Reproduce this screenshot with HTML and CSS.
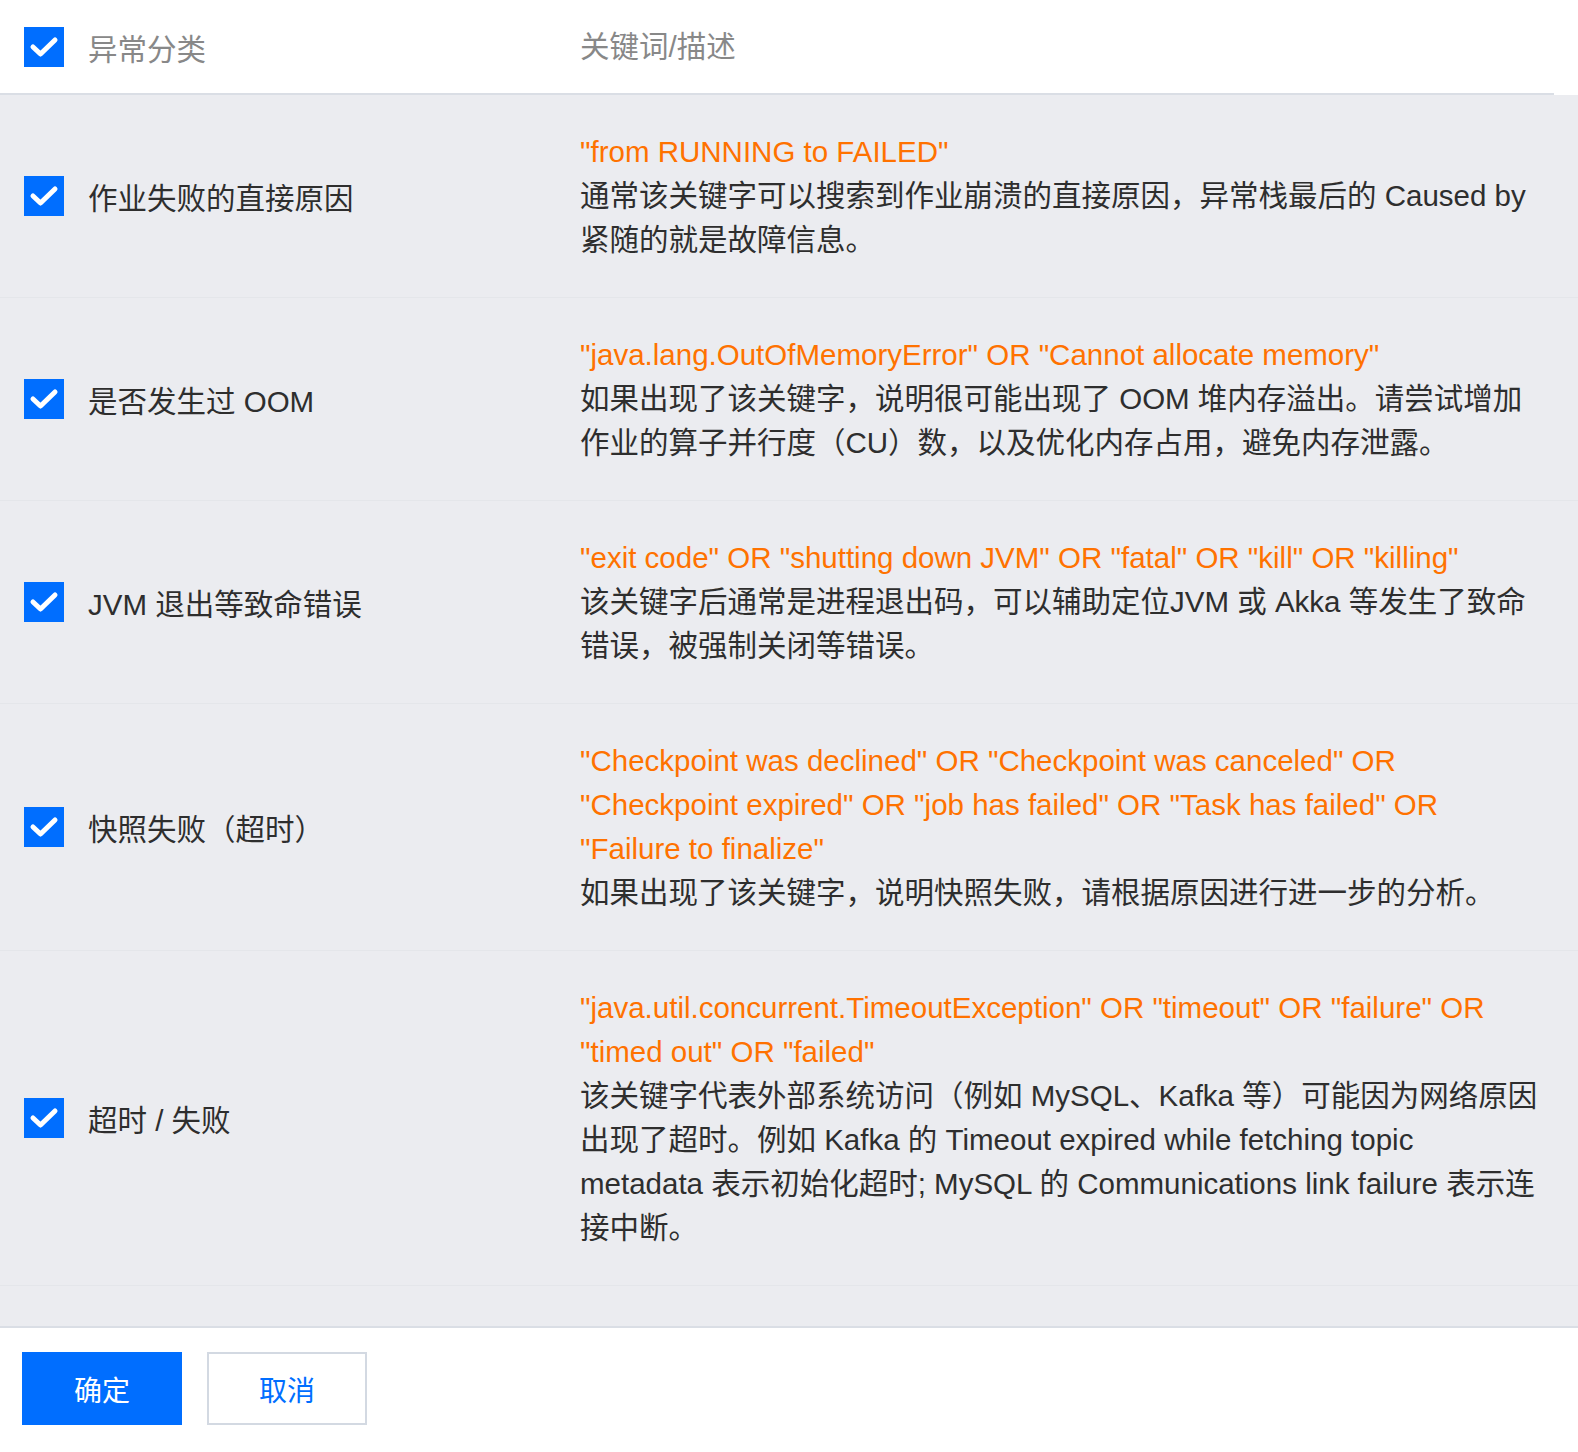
FILE: index.html
```html
<!DOCTYPE html>
<html lang="zh-CN">
<head>
    <meta charset="UTF-8">
    <title>异常分类</title>
    <link rel="stylesheet" href="styles.css">
</head>
<body>
    <div class="rule-table">
        <div class="table-head">
            <div class="col-type">
                <span class="checkbox"><svg viewBox="0 0 40 40"><path d="M9 20 L16.5 27 L31 13"/></svg></span>
                <span>异常分类</span>
            </div>
            <div class="col-desc">关键词/描述</div>
        </div>

        <div class="table-body">
            <div class="table-row">
                <div class="col-type">
                    <span class="checkbox"><svg viewBox="0 0 40 40"><path d="M9 20 L16.5 27 L31 13"/></svg></span>
                    <span>作业失败的直接原因</span>
                </div>
                <div class="col-desc">
                    <div class="keyword">"from RUNNING to FAILED"</div>
                    <div>通常该关键字可以搜索到作业崩溃的直接原因，异常栈最后的 Caused by<br>紧随的就是故障信息。</div>
                </div>
            </div>

            <div class="table-row">
                <div class="col-type">
                    <span class="checkbox"><svg viewBox="0 0 40 40"><path d="M9 20 L16.5 27 L31 13"/></svg></span>
                    <span>是否发生过 OOM</span>
                </div>
                <div class="col-desc">
                    <div class="keyword">"java.lang.OutOfMemoryError" OR "Cannot allocate memory"</div>
                    <div>如果出现了该关键字，说明很可能出现了 OOM 堆内存溢出。请尝试增加<br>作业的算子并行度（CU）数，以及优化内存占用，避免内存泄露。</div>
                </div>
            </div>

            <div class="table-row">
                <div class="col-type">
                    <span class="checkbox"><svg viewBox="0 0 40 40"><path d="M9 20 L16.5 27 L31 13"/></svg></span>
                    <span>JVM 退出等致命错误</span>
                </div>
                <div class="col-desc">
                    <div class="keyword">"exit code" OR "shutting down JVM" OR "fatal" OR "kill" OR "killing"</div>
                    <div>该关键字后通常是进程退出码，可以辅助定位JVM 或 Akka 等发生了致命<br>错误，被强制关闭等错误。</div>
                </div>
            </div>

            <div class="table-row">
                <div class="col-type">
                    <span class="checkbox"><svg viewBox="0 0 40 40"><path d="M9 20 L16.5 27 L31 13"/></svg></span>
                    <span>快照失败（超时）</span>
                </div>
                <div class="col-desc">
                    <div class="keyword">"Checkpoint was declined" OR "Checkpoint was canceled" OR<br>"Checkpoint expired" OR "job has failed" OR "Task has failed" OR<br>"Failure to finalize"</div>
                    <div>如果出现了该关键字，说明快照失败，请根据原因进行进一步的分析。</div>
                </div>
            </div>

            <div class="table-row">
                <div class="col-type">
                    <span class="checkbox"><svg viewBox="0 0 40 40"><path d="M9 20 L16.5 27 L31 13"/></svg></span>
                    <span>超时 / 失败</span>
                </div>
                <div class="col-desc">
                    <div class="keyword">"java.util.concurrent.TimeoutException" OR "timeout" OR "failure" OR<br>"timed out" OR "failed"</div>
                    <div>该关键字代表外部系统访问（例如 MySQL、Kafka 等）可能因为网络原因<br>出现了超时。例如 Kafka 的 Timeout expired while fetching topic<br>metadata 表示初始化超时; MySQL 的 Communications link failure 表示连<br>接中断。</div>
                </div>
            </div>
        </div>
    </div>

    <div class="footer">
        <button class="btn btn-primary">确定</button>
        <button class="btn btn-default">取消</button>
    </div>
</body>
</html>
```

FILE: styles.css
```css
* {
    margin: 0;
    padding: 0;
    box-sizing: border-box;
}

body {
    background: #fff;
    font-family: 'Liberation Sans', 'Noto Sans CJK SC', sans-serif;
    font-size: 29.5px;
    color: #2e2e2e;
}

.table-head {
    display: flex;
    align-items: center;
    height: 95px;
    margin-right: 24px;
    border-bottom: 2px solid #dadee5;
    color: #888;
}

.table-body {
    background: #ebecf0;
    padding-bottom: 40px;
}

.table-row {
    display: flex;
    align-items: center;
    padding: 35px 0;
    border-bottom: 1px solid #e4e6ea;
}

.col-type {
    width: 580px;
    flex-shrink: 0;
    display: flex;
    align-items: center;
    padding-left: 24px;
}

.col-desc {
    flex: 1;
    padding-right: 8px;
    line-height: 44px;
}

.checkbox {
    width: 40px;
    height: 40px;
    background: #006eff;
    margin-right: 24px;
    display: flex;
}

.checkbox svg {
    width: 40px;
    height: 40px;
}

.checkbox path {
    fill: none;
    stroke: #fff;
    stroke-width: 5;
    stroke-linecap: round;
    stroke-linejoin: round;
}

.keyword {
    color: #ff7200;
}

.footer {
    border-top: 2px solid #dadee5;
    padding: 24px 22px 28px;
    display: flex;
    gap: 25px;
}

.btn {
    width: 160px;
    height: 73px;
    font-family: inherit;
    font-size: 28px;
    cursor: pointer;
}

.btn-primary {
    background: #006eff;
    border: 1px solid #006eff;
    color: #fff;
}

.btn-default {
    background: #fff;
    border: 2px solid #d3d9e2;
    color: #006eff;
}
```
